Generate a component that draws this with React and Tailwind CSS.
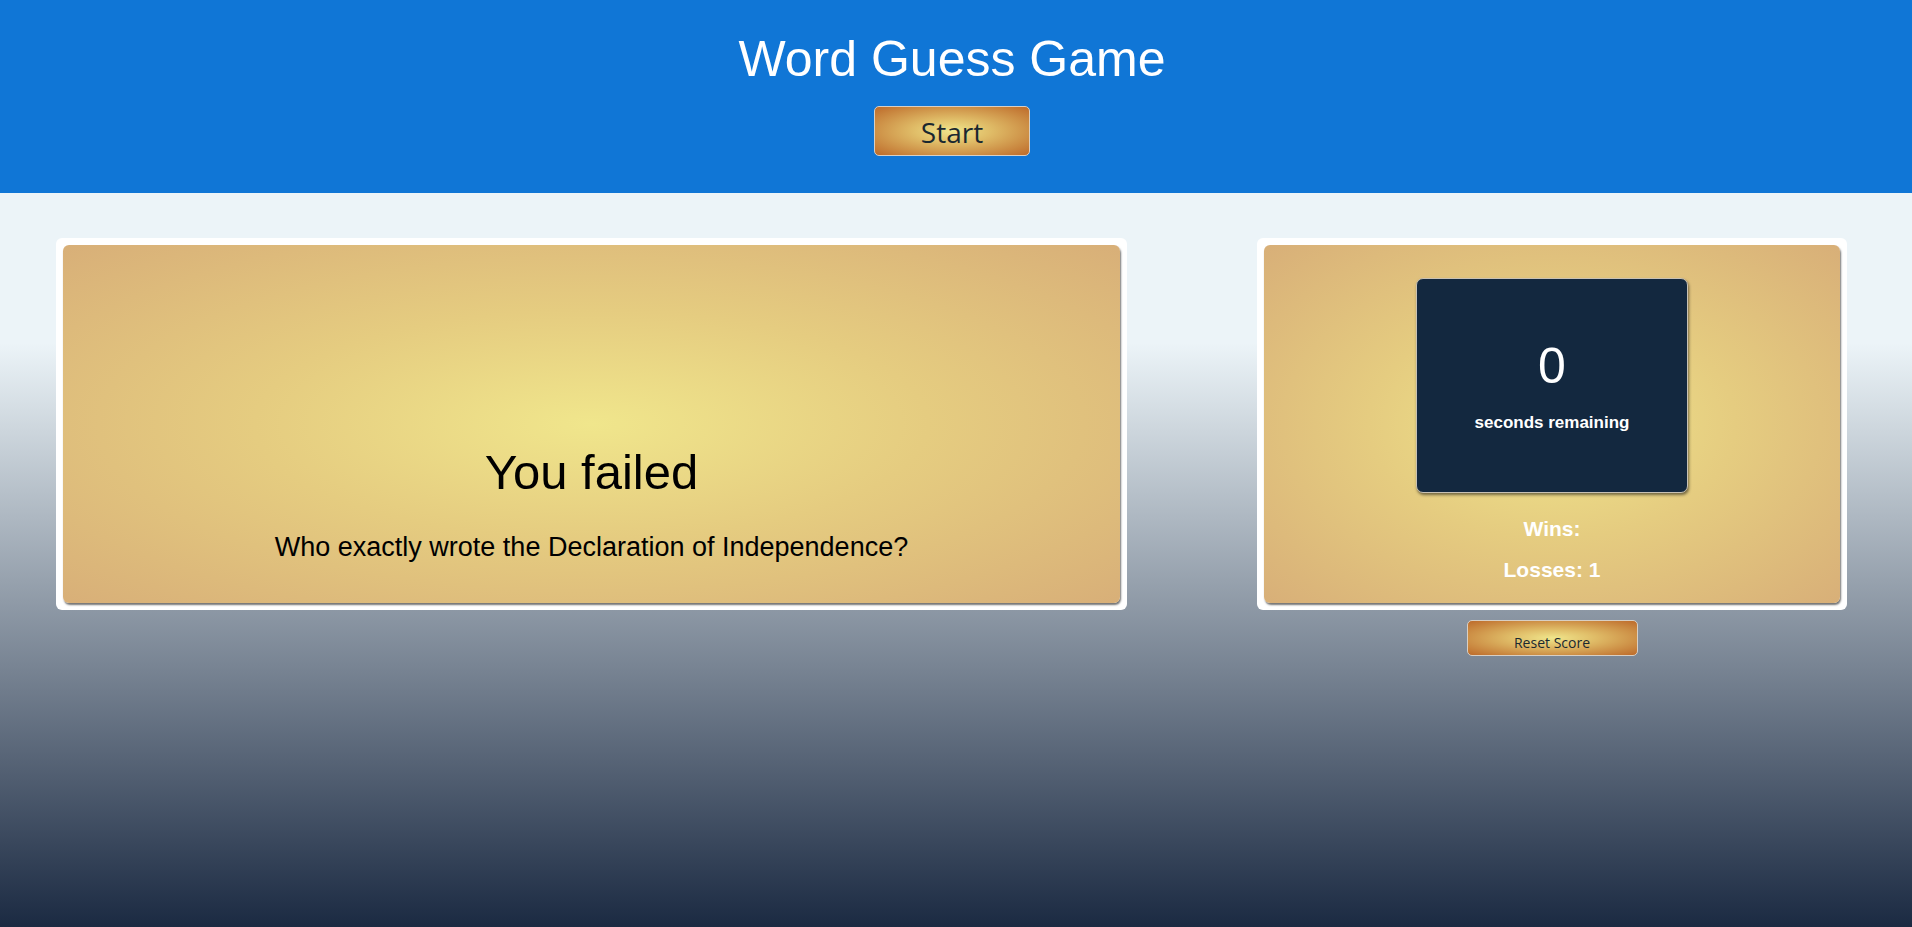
import React from 'react';

export default function App() {
  const goldBtn =
    'bg-[radial-gradient(ellipse_at_center,#f0e68c_0%,#e0bd68_35%,#bd6a2a_100%)] border border-[#d8cfc4] rounded-[5px] text-[#1a2830] font-["Open_Sans",sans-serif]';
  const card =
    'bg-[radial-gradient(ellipse_at_center,#f0e68c_0%,#e5cc80_45%,#d8af78_100%)] rounded-[6px] shadow-[1px_2px_2px_rgba(0,0,0,0.55)]';

  return (
    <div className="min-h-[927px] w-full bg-[linear-gradient(to_bottom,#ecf4f8_0%,#ecf4f8_37%,#1b2a42_100%)] font-['Liberation_Sans',Arial,sans-serif]">
      {/* Header */}
      <header className="bg-[#1076d6] h-[193px] flex flex-col items-center pt-[34px] pr-[8px]">
        <h1 className="text-white text-[50px] leading-none">Word Guess Game</h1>
        <button className={`${goldBtn} mt-[22px] w-[156px] h-[50px] text-[28px] leading-none pt-[2px]`}>
          Start
        </button>
      </header>

      {/* Main */}
      <main className="flex pt-[45px] pl-[56px] gap-[130px]">
        {/* Question panel */}
        <section className="w-[1071px] h-[372px] bg-white rounded-[6px] p-[7px]">
          <div className={`${card} h-full flex flex-col items-center justify-end pb-[42px] text-black`}>
            <h2 className="text-[49px] leading-none">You failed</h2>
            <p className="mt-[37px] text-[27px] leading-none">
              Who exactly wrote the Declaration of Independence?
            </p>
          </div>
        </section>

        {/* Score panel */}
        <div className="flex flex-col items-center">
          <section className="w-[590px] h-[372px] bg-white rounded-[6px] p-[7px]">
            <div className={`${card} h-full flex flex-col items-center pt-[33px]`}>
              <div className="w-[272px] h-[215px] bg-[#13283f] rounded-[7px] border border-[#c9c2b4] shadow-[1px_2px_3px_rgba(0,0,0,0.5)] flex flex-col items-center pt-[62px] text-white">
                <span className="text-[50px] leading-none">0</span>
                <span className="mt-[23px] text-[17px] leading-none font-bold">seconds remaining</span>
              </div>
              <p className="mt-[25px] text-white font-bold text-[21px] leading-none">Wins: </p>
              <p className="mt-[20px] text-white font-bold text-[21px] leading-none">Losses: 1</p>
            </div>
          </section>
          <button className={`${goldBtn} mt-[10px] w-[171px] h-[36px] text-[14px] leading-none pt-[9px]`}>
            Reset Score
          </button>
        </div>
      </main>
    </div>
  );
}
